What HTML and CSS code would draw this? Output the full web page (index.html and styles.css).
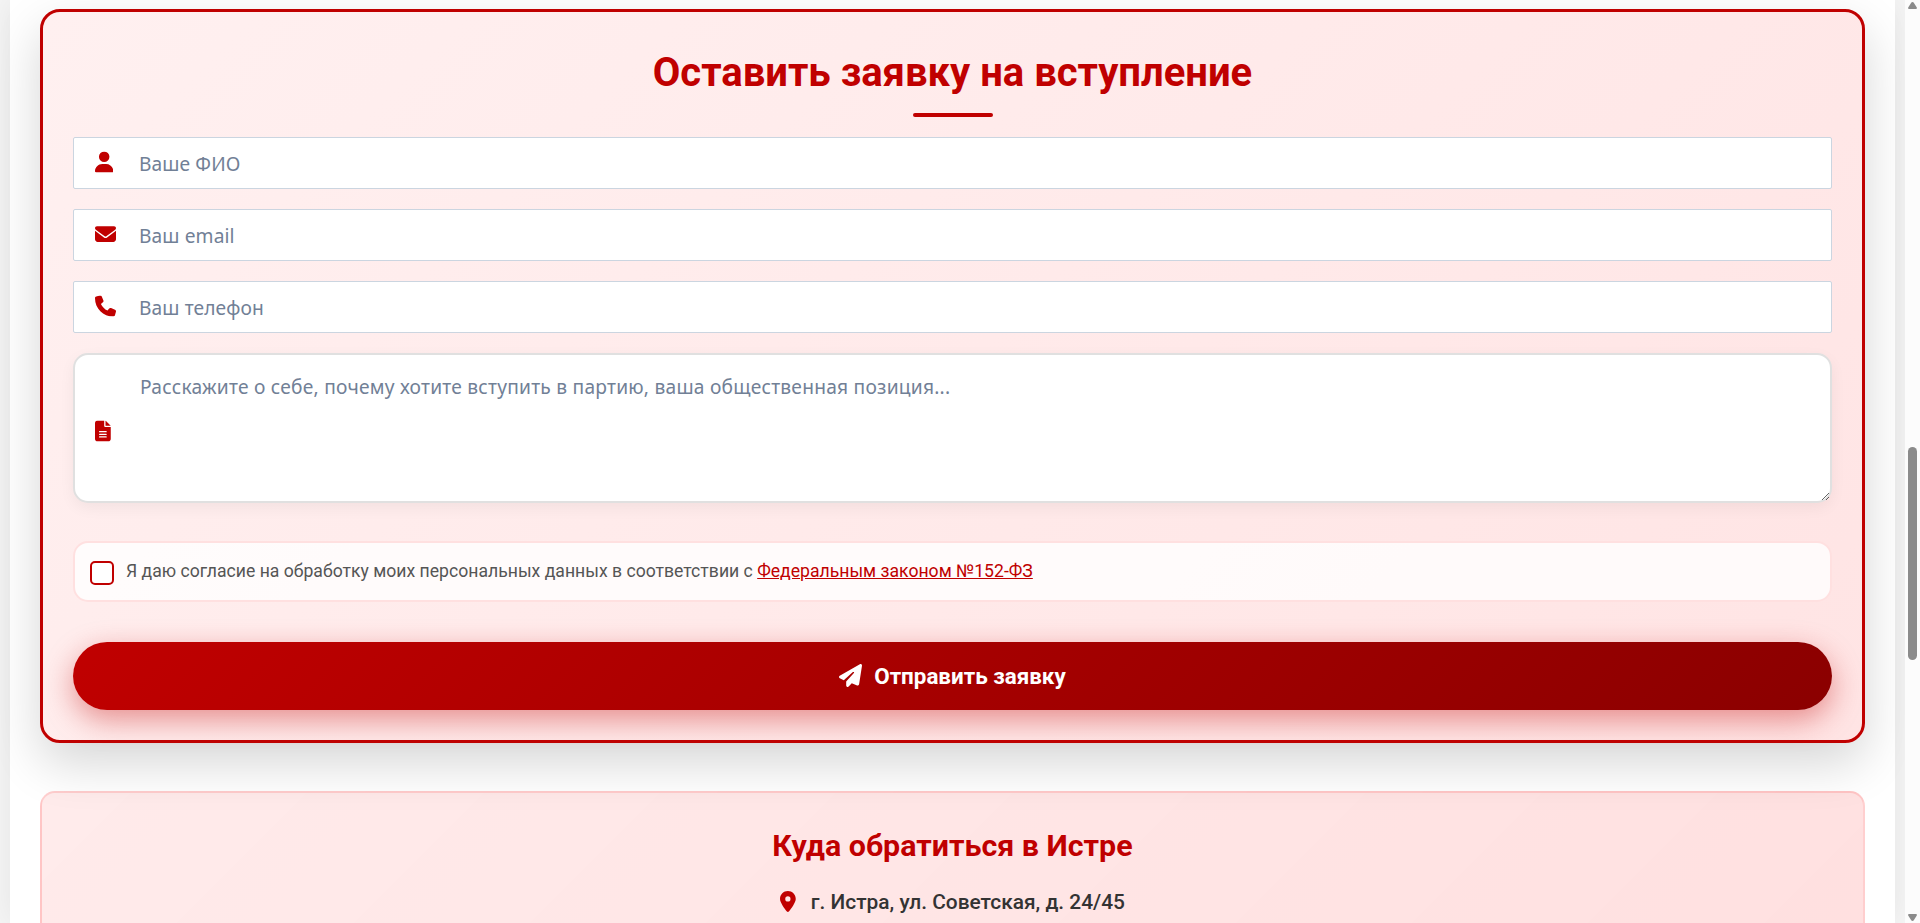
FILE: index.html
```html
<!DOCTYPE html>
<html lang="ru">
  <head>
    <meta charset="UTF-8" />
    <meta name="viewport" content="width=device-width, initial-scale=1.0" />
    <title>Вступить в партию</title>
    <link rel="stylesheet" href="styles.css">
  </head>
  <body>
    <div class="page">
      <main class="container">
        <section class="join-form">
          <h2>Оставить заявку на вступление</h2>
          <form>
            <div class="form-group">
              <input type="text" placeholder="Ваше ФИО">
              <svg class="icon" viewBox="0 0 448 512"><path d="M224 256A128 128 0 1 0 224 0a128 128 0 1 0 0 256zm-45.7 48C79.8 304 0 383.8 0 482.3C0 498.7 13.3 512 29.7 512l388.6 0c16.4 0 29.7-13.3 29.7-29.7C448 383.8 368.2 304 269.7 304l-91.4 0z"/></svg>
            </div>
            <div class="form-group">
              <input type="email" placeholder="Ваш email">
              <svg class="icon" viewBox="0 0 512 512"><path d="M48 64C21.5 64 0 85.5 0 112c0 15.1 7.1 29.3 19.2 38.4L236.8 313.6c11.4 8.5 27 8.5 38.4 0L492.8 150.4c12.1-9.1 19.2-23.3 19.2-38.4c0-26.5-21.5-48-48-48L48 64zM0 176L0 384c0 35.3 28.7 64 64 64l384 0c35.3 0 64-28.7 64-64l0-208L294.4 339.2c-22.8 17.1-54 17.1-76.8 0L0 176z"/></svg>
            </div>
            <div class="form-group">
              <input type="tel" placeholder="Ваш телефон">
              <svg class="icon" viewBox="0 0 512 512"><path d="M164.9 24.6c-7.7-18.6-28-28.5-47.4-23.2l-88 24C12.1 30.2 0 46 0 64C0 311.4 200.6 512 448 512c18 0 33.8-12.1 38.6-29.5l24-88c5.3-19.4-4.6-39.7-23.2-47.4l-96-40c-16.3-6.8-35.2-2.1-46.3 11.6L304.7 368C234.3 334.7 177.3 277.7 144 207.3L193.3 167c13.7-11.2 18.4-30 11.6-46.3l-40-96z"/></svg>
            </div>
            <div class="form-group form-group-text">
              <textarea placeholder="Расскажите о себе, почему хотите вступить в партию, ваша общественная позиция..."></textarea>
              <svg class="icon" viewBox="0 0 384 512"><path d="M64 0C28.7 0 0 28.7 0 64L0 448c0 35.3 28.7 64 64 64l256 0c35.3 0 64-28.7 64-64l0-288-128 0c-17.7 0-32-14.3-32-32L224 0 64 0zM256 0l0 128 128 0L256 0zM112 256l160 0c8.8 0 16 7.2 16 16s-7.2 16-16 16l-160 0c-8.8 0-16-7.2-16-16s7.2-16 16-16zm0 64l160 0c8.8 0 16 7.2 16 16s-7.2 16-16 16l-160 0c-8.8 0-16-7.2-16-16s7.2-16 16-16zm0 64l160 0c8.8 0 16 7.2 16 16s-7.2 16-16 16l-160 0c-8.8 0-16-7.2-16-16s7.2-16 16-16z"/></svg>
            </div>
            <div class="consent">
              <input type="checkbox" id="consent">
              <label for="consent">Я даю согласие на обработку моих персональных данных в соответствии с <a href="#">Федеральным законом №152-ФЗ</a></label>
            </div>
            <button type="submit" class="submit-btn">
              <svg viewBox="0 0 512 512"><path d="M498.1 5.6c10.1 7 15.4 19.1 13.5 31.2l-64 416c-1.5 9.7-7.4 18.2-16 23s-18.9 5.4-28 1.6L284 427.7l-68.5 74.1c-8.9 9.7-22.9 12.9-35.2 8.1S160 493.2 160 480l0-83.6c0-4 1.5-7.8 4.2-10.8L331.8 202.8c5.8-6.3 5.6-16-.4-22s-15.7-6.4-22-.7L106 360.8 17.7 316.6C7.1 311.3 .3 300.7 0 288.9s5.9-22.8 16.1-28.7l448-256c10.7-6.1 23.9-5.5 34 1.4z"/></svg>
              <span>Отправить заявку</span>
            </button>
          </form>
        </section>

        <section class="contacts">
          <h3>Куда обратиться в Истре</h3>
          <p class="address">
            <svg viewBox="0 0 384 512"><path d="M215.7 499.2C267 435 384 279.4 384 192C384 86 298 0 192 0S0 86 0 192c0 87.4 117 243 168.3 307.2c12.3 15.3 35.1 15.3 47.4 0zM192 128a64 64 0 1 1 0 128 64 64 0 1 1 0-128z"/></svg>
            <span>г. Истра, ул. Советская, д. 24/45</span>
          </p>
        </section>
      </main>

      <div class="scrollbar">
        <svg class="arrow" viewBox="0 0 9 7"><path d="M4.5 0Q5.3 0 5.8 .8L8.8 5.6Q9.2 7 8 7H1Q-.2 7 .2 5.6L3.2 .8Q3.7 0 4.5 0z"/></svg>
        <div class="thumb"></div>
        <svg class="arrow arrow-down" viewBox="0 0 9 7"><path d="M4.5 0Q5.3 0 5.8 .8L8.8 5.6Q9.2 7 8 7H1Q-.2 7 .2 5.6L3.2 .8Q3.7 0 4.5 0z"/></svg>
      </div>
    </div>
  </body>
</html>
```
FILE: styles.css
```css
* {
  margin: 0;
  padding: 0;
  box-sizing: border-box;
}

body {
  font-family: Roboto, sans-serif;
  color: #333;
  overflow: hidden;
}

.page {
  display: grid;
  grid-template-columns: 1fr 15px;
  height: 100vh;
  padding-left: 10px;
  overflow: hidden;
  background: #f5f5f5;
}

.container {
  height: 100vh;
  margin-right: 10px;
  padding: 9px 30px 0;
  background: #fff;
  box-shadow: 0 0 30px rgba(0, 0, 0, 0.07);
}

/* Application form */
.join-form {
  height: 734px;
  padding: 30px;
  border: 3px solid #c00000;
  border-radius: 20px;
  background: linear-gradient(135deg, #fff0f0 0%, #ffe4e4 100%);
  box-shadow: 0 20px 50px rgba(0, 0, 0, 0.165);
}

.join-form h2 {
  display: flex;
  flex-direction: column;
  align-items: center;
  margin-bottom: 20px;
  font-size: 40px;
  font-weight: 700;
  line-height: 62px;
  color: #c00000;
}

.join-form h2::after {
  content: '';
  width: 80px;
  height: 4px;
  margin-top: 9px;
  border-radius: 2px;
  background: #c00000;
}

.form-group {
  position: relative;
  height: 52px;
  margin-bottom: 20px;
}

.form-group-text {
  height: 158px;
  margin-bottom: 30px;
}

.form-group input,
.form-group textarea {
  display: block;
  width: 100%;
  font-family: 'Noto Sans', sans-serif;
  font-size: 19.2px;
  letter-spacing: 0.1px;
  color: #333;
  background: #fff;
}

.form-group input {
  height: 52px;
  padding: 1px 20px 0 65px;
  border: 1px solid #cbd5e0;
  border-radius: 2px;
}

.form-group textarea {
  height: 150px;
  padding: 18px 20px 18px 65px;
  border: 2px solid #e0e0e0;
  border-radius: 15px;
  box-shadow: 0 5px 15px rgba(0, 0, 0, 0.05);
  letter-spacing: 0.23px;
  resize: vertical;
}

.form-group input::placeholder,
.form-group textarea::placeholder {
  color: #718096;
}

.icon {
  position: absolute;
  left: 22px;
  top: calc(50% - 1px);
  height: 21px;
  transform: translateY(-50%);
  fill: #c00000;
}

.consent {
  display: flex;
  gap: 12px;
  height: 61px;
  margin-bottom: 40px;
  padding: 18px 15px;
  border: 2px solid #ffe0e0;
  border-radius: 15px;
  background: rgba(255, 255, 255, 0.8);
}

.consent input {
  appearance: none;
  width: 24px;
  height: 24px;
  border: 2px solid #c00000;
  border-radius: 5px;
  background: #fff;
}

.consent label {
  font-size: 17.6px;
  line-height: 20px;
  letter-spacing: 0.01px;
  color: #555;
}

.consent a {
  color: #c00000;
  text-decoration: underline;
}

.submit-btn {
  display: flex;
  align-items: center;
  justify-content: center;
  gap: 12px;
  width: 100%;
  height: 68px;
  padding-bottom: 1px;
  border: none;
  border-radius: 50px;
  background: linear-gradient(135deg, #c00000 0%, #8b0000 100%);
  box-shadow: 0 10px 30px rgba(192, 0, 0, 0.4);
  font-family: Roboto, sans-serif;
  font-size: 22.4px;
  font-weight: 700;
  color: #fff;
  cursor: pointer;
}

.submit-btn svg {
  height: 23px;
  fill: #fff;
}

/* Contacts */
.contacts {
  display: flex;
  flex-direction: column;
  align-items: center;
  height: 300px;
  margin-top: 48px;
  padding: 30px;
  border: 2px solid rgba(255, 0, 0, 0.12);
  border-radius: 15px;
  background: linear-gradient(135deg, rgba(255, 0, 0, 0.08), rgba(255, 0, 0, 0.125));
}

.contacts h3 {
  margin-bottom: 15px;
  font-size: 30.4px;
  font-weight: 700;
  line-height: 46px;
  color: #c00000;
}

.address {
  display: flex;
  align-items: center;
  gap: 15px;
  font-size: 20.9px;
  font-weight: 500;
  line-height: 36px;
}

.address svg {
  height: 21px;
  margin-top: -2px;
  fill: #c00000;
}

/* Page scrollbar */
.scrollbar {
  display: flex;
  flex-direction: column;
  align-items: center;
  height: 100vh;
  padding: 2px 0;
  background: #fcfcfc;
  z-index: 1;
}

.arrow {
  width: 9px;
  height: 7px;
  fill: #8b8b8b;
}

.arrow-down {
  margin-top: auto;
  transform: rotate(180deg);
}

.thumb {
  width: 9px;
  height: 213px;
  margin-top: 438px;
  border-radius: 5px;
  background: #8b8b8b;
}
```
